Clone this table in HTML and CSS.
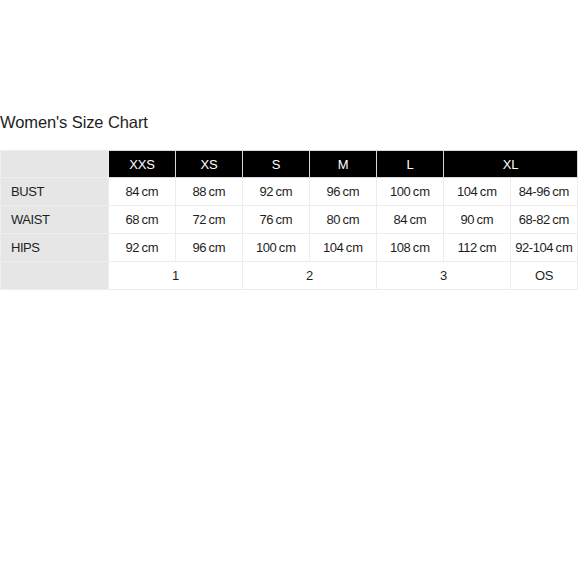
FILE: index.html
```html
<!DOCTYPE html>
<html>
<head>
<meta charset="utf-8">
<link rel="stylesheet" href="styles.css">
</head>
<body>
<div class="page">
  <h2 class="title">Women's Size Chart</h2>
  <table class="chart">
    <colgroup>
      <col class="c-label">
      <col class="c-size"><col class="c-size"><col class="c-size"><col class="c-size"><col class="c-size"><col class="c-size"><col class="c-size">
    </colgroup>
    <thead>
      <tr>
        <th class="label"></th>
        <th class="size">XXS</th>
        <th class="size">XS</th>
        <th class="size">S</th>
        <th class="size">M</th>
        <th class="size">L</th>
        <th class="size" colspan="2">XL</th>
      </tr>
    </thead>
    <tbody>
      <tr>
        <td class="label">BUST</td>
        <td>84<span class="u">cm</span></td><td>88<span class="u">cm</span></td><td>92<span class="u">cm</span></td><td>96<span class="u">cm</span></td><td>100<span class="u">cm</span></td><td>104<span class="u">cm</span></td><td>84-96<span class="u">cm</span></td>
      </tr>
      <tr>
        <td class="label">WAIST</td>
        <td>68<span class="u">cm</span></td><td>72<span class="u">cm</span></td><td>76<span class="u">cm</span></td><td>80<span class="u">cm</span></td><td>84<span class="u">cm</span></td><td>90<span class="u">cm</span></td><td>68-82<span class="u">cm</span></td>
      </tr>
      <tr>
        <td class="label">HIPS</td>
        <td>92<span class="u">cm</span></td><td>96<span class="u">cm</span></td><td>100<span class="u">cm</span></td><td>104<span class="u">cm</span></td><td>108<span class="u">cm</span></td><td>112<span class="u">cm</span></td><td>92-104<span class="u">cm</span></td>
      </tr>
      <tr>
        <td class="label"></td>
        <td colspan="2">1</td><td colspan="2">2</td><td colspan="2">3</td><td>OS</td>
      </tr>
    </tbody>
  </table>
</div>
</body>
</html>
```

FILE: styles.css
```css
html, body {
  margin: 0;
  padding: 0;
  background: #ffffff;
}

.page {
  padding-top: 112px;
  font-family: "Liberation Sans", Arial, sans-serif;
  color: #1e1e1e;
}

.title {
  margin: 0 0 18px 0;
  font-size: 16.5px;
  line-height: 20px;
  font-weight: normal;
  letter-spacing: -0.1px;
}

.chart {
  width: 578px;
  table-layout: fixed;
  border-collapse: collapse;
  font-size: 13px;
  letter-spacing: -0.45px;
}

.c-label { width: 108px; }
.c-size { width: 67px; }

.chart th,
.chart td {
  padding: 0;
  border: 1px solid #ececec;
  text-align: center;
  height: 27px;
  font-weight: normal;
}

.chart .u {
  margin-left: 2.5px;
  letter-spacing: -0.1px;
}

.chart thead th {
  height: 26px;
}

.chart th.size {
  background: #000000;
  color: #ffffff;
  letter-spacing: -0.2px;
  border-color: #d8d8d8;
}

.chart .label {
  background: #e6e6e6;
  text-align: left;
  padding-left: 10px;
  border-color: #eeeeee;
}
```
